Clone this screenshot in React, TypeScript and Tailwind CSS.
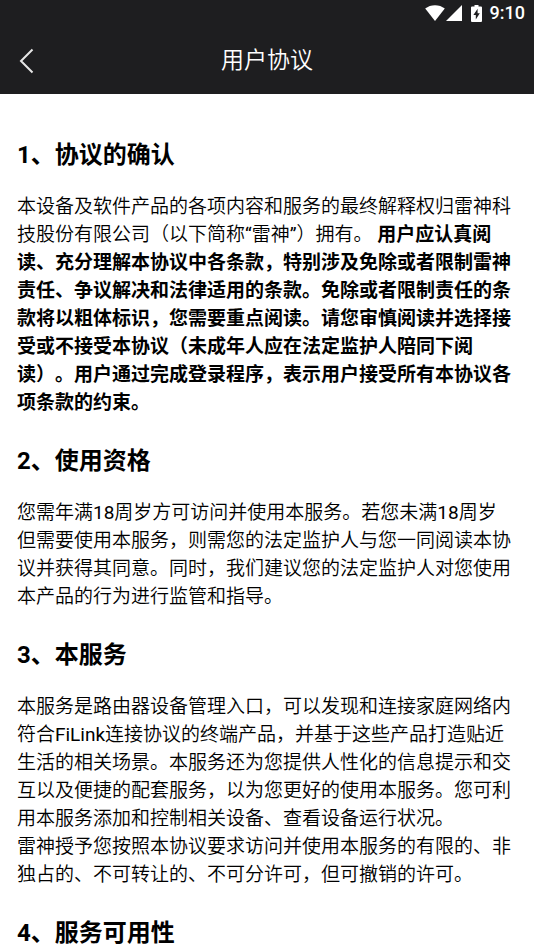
import React from 'react';

interface Section {
  title: string;
  body: React.ReactNode;
}

const sections: Section[] = [
  {
    title: '1、协议的确认',
    body: (
      <>
        本设备及软件产品的各项内容和服务的最终解释权归雷神科技股份有限公司（以下简称“雷神”）拥有。{' '}
        <strong className="font-[Roboto,'Noto_Sans_CJK_SC',sans-serif] font-bold">
          用户应认真阅读、充分理解本协议中各条款，特别涉及免除或者限制雷神责任、争议解决和法律适用的条款。免除或者限制责任的条款将以粗体标识，您需要重点阅读。请您审慎阅读并选择接受或不接受本协议（未成年人应在法定监护人陪同下阅读）。用户通过完成登录程序，表示用户接受所有本协议各项条款的约束。
        </strong>
      </>
    ),
  },
  {
    title: '2、使用资格',
    body: '您需年满18周岁方可访问并使用本服务。若您未满18周岁但需要使用本服务，则需您的法定监护人与您一同阅读本协议并获得其同意。同时，我们建议您的法定监护人对您使用本产品的行为进行监管和指导。',
  },
  {
    title: '3、本服务',
    body: (
      <>
        本服务是路由器设备管理入口，可以发现和连接家庭网络内符合FiLink连接协议的终端产品，并基于这些产品打造贴近生活的相关场景。本服务还为您提供人性化的信息提示和交互以及便捷的配套服务，以为您更好的使用本服务。您可利用本服务添加和控制相关设备、查看设备运行状况。
        <br />
        雷神授予您按照本协议要求访问并使用本服务的有限的、非独占的、不可转让的、不可分许可，但可撤销的许可。
      </>
    ),
  },
  { title: '4、服务可用性', body: null },
];

const StatusBar = () => (
  <div className="flex h-[26px] items-center justify-end pr-[9px] text-white">
    <svg className="h-[16px] w-[20px]" viewBox="0 0 20 16" fill="currentColor" aria-label="Wi-Fi">
      <path d="M10 16 0.2 3.6C3 1.4 6.3 0.2 10 0.2s7 1.2 9.8 3.4z" />
    </svg>
    <svg className="ml-px h-[16px] w-[16px]" viewBox="0 0 16 16" fill="currentColor" aria-label="Signal">
      <path d="M0 16 16 0v16z" />
    </svg>
    <svg className="ml-[9px] h-[17px] w-[11px]" viewBox="0 0 11 17" fill="currentColor" aria-label="Charging">
      <path fillRule="evenodd" d="M3.5 0h4v1.6H10q1 0 1 1V16q0 1-1 1H1q-1 0-1-1V2.6q0-1 1-1h2.5zM6.6 3.8 2.4 10h2.4v4.6L8.8 8.2H6.6z" />
    </svg>
    <span className="ml-[8px] text-[18px] leading-[26px] font-medium">9:10</span>
  </div>
);

export default function App() {
  return (
    <div className="h-screen overflow-hidden bg-white font-[Roboto,'Noto_Sans_CJK_SC',sans-serif] text-black [text-spacing-trim:space-all]">
      <header className="bg-[#1e1e20] text-white">
        <StatusBar />
        <div className="grid h-[68px] grid-cols-[52px_1fr_52px] items-center pt-[2px]">
          <button type="button" aria-label="返回" className="flex items-center pl-[18px]">
            <svg className="h-[26px] w-[16px]" viewBox="0 0 16 26" fill="none" stroke="#e6e6e6" strokeWidth="2">
              <path d="M14.5 1.5 3 13l11.5 11.5" />
            </svg>
          </button>
          <h1 className="text-center text-[23px] font-[350]">用户协议</h1>
        </div>
      </header>
      <main className="pt-[44px] pr-[22px] pl-[17px]">
        {sections.map((section) => (
          <section key={section.title}>
            <h2 className="mb-[21px] text-[24px] leading-[34px] font-bold">{section.title}</h2>
            <p className="mb-[27px] font-[Roboto,'Noto_Sans_CJK_SC_DemiLight','Noto_Sans_CJK_SC',sans-serif] text-[19px] leading-[28px]">
              {section.body}
            </p>
          </section>
        ))}
      </main>
    </div>
  );
}
